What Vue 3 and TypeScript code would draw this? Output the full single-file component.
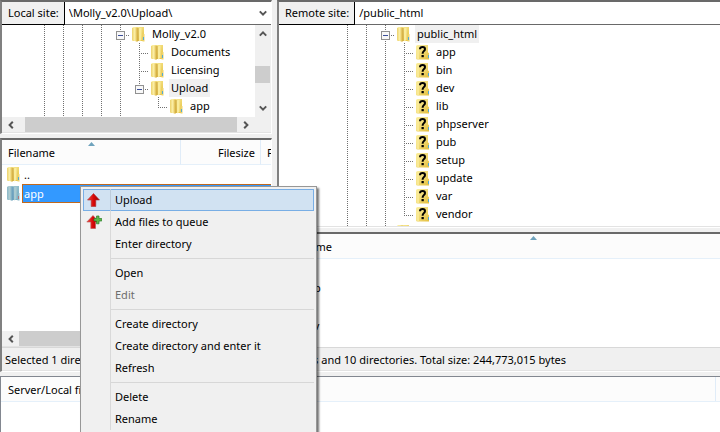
<script setup lang="ts">
import { ref } from 'vue'

// Guide cells drawn before an entry: v = line, t = tee, l = elbow, x = expander, e = last expander, b = blank
interface TreeNode {
  name: string
  guides: string
  icon: 'folder' | 'unknown' | 'none'
  selected?: boolean
}
interface MenuEntry {
  label?: string
  icon?: 'upload' | 'queue'
  active?: boolean
  disabled?: boolean
  separator?: boolean
}

const localPath = ref('\\Molly_v2.0\\Upload\\')
const remotePath = ref('/public_html')

const localTree: TreeNode[] = [
  { name: 'Molly_v2.0', guides: 'vvvvx', icon: 'folder' },
  { name: 'Documents', guides: 'vvvvvt', icon: 'folder' },
  { name: 'Licensing', guides: 'vvvvvt', icon: 'folder' },
  { name: 'Upload', guides: 'vvvvve', icon: 'folder', selected: true },
  { name: 'app', guides: 'vvvvvbl', icon: 'folder' },
  { name: '', guides: 'vvvvv', icon: 'none' },
]

const remoteNames = ['app', 'bin', 'dev', 'lib', 'phpserver', 'pub', 'setup', 'update', 'var', 'vendor']
const remoteTree: TreeNode[] = [
  { name: 'public_html', guides: 'vvx', icon: 'folder', selected: true },
  ...remoteNames.map((name, i): TreeNode => ({
    name,
    guides: i === remoteNames.length - 1 ? 'vvvl' : 'vvvt',
    icon: 'unknown',
  })),
  { name: '', guides: 'vvv', icon: 'folder' },
]

const remoteFiles = ['..', 'app', 'bin', 'dev']

const menu: MenuEntry[] = [
  { label: 'Upload', icon: 'upload', active: true },
  { label: 'Add files to queue', icon: 'queue' },
  { label: 'Enter directory' },
  { separator: true },
  { label: 'Open' },
  { label: 'Edit', disabled: true },
  { separator: true },
  { label: 'Create directory' },
  { label: 'Create directory and enter it' },
  { label: 'Refresh' },
  { separator: true },
  { label: 'Delete' },
  { label: 'Rename' },
]

const guidePaths: Record<string, string> = {
  v: 'M9.5 0V18',
  t: 'M9.5 0V18M11 10.5H19',
  l: 'M9.5 0V10M9 10.5H19',
  x: 'M9.5 0V5M9.5 16V18M15 10.5H19',
  e: 'M9.5 0V5M15 10.5H19',
  b: '',
}
</script>

<template>
  <svg class="defs" aria-hidden="true">
    <defs>
      <linearGradient id="gold" x1="0" y1="0" x2="1" y2="1">
        <stop offset="0" stop-color="#fdf3a8" />
        <stop offset="1" stop-color="#e4bf3e" />
      </linearGradient>
      <linearGradient id="flap" x1="0" y1="0" x2="1" y2="0">
        <stop offset="0" stop-color="#ecd26c" />
        <stop offset="0.5" stop-color="#fcf0a8" />
        <stop offset="1" stop-color="#d9b03a" />
      </linearGradient>
      <linearGradient id="red" x1="0" y1="0" x2="1" y2="0">
        <stop offset="0" stop-color="#f04a40" />
        <stop offset="0.5" stop-color="#d80808" />
        <stop offset="1" stop-color="#900" />
      </linearGradient>
      <symbol id="folder" viewBox="0 0 20 18">
        <path d="M2 3.5Q2 2 3.5 2H14V16H3.5Q2 16 2 14.5Z" fill="url(#gold)" />
        <path d="M2 3L7.5 2.5V17L2 15Z" fill="url(#flap)" />
        <path d="M8 3V16" stroke="#c9a23a" />
        <path d="M9 3.5L11.5 2.5V15L9 16.5Z" fill="#faec9c" />
        <path d="M12.5 9H14.5V16.5H12.5Z" fill="#eed36a" />
        <path d="M13.5 12V15" stroke="#54a9d2" />
      </symbol>
      <symbol id="unknown" viewBox="0 0 20 18">
        <path d="M2 3.5Q2 2 3.5 2H14V9.5L15 10V16.5H3.5Q2 16.5 2 15Z" fill="url(#gold)" />
        <path d="M2.5 3V15.5L5 16.5V2.5Z" fill="#f9e994" />
        <path d="M14.5 12V15" stroke="#54a9d2" />
        <path d="M6 6.2Q6 3.9 8.6 3.9Q11 3.9 11 6Q11 7.3 9.7 8.2Q8.6 9 8.6 10.7" fill="none" stroke="#000" stroke-width="2" />
        <path d="M7.5 12H9.8V14.2H7.5Z" />
      </symbol>
      <symbol id="up" viewBox="0 0 8 8"><path d="M0.8 5.6L4 2.4L7.2 5.6" fill="none" stroke="#555" stroke-width="2" /></symbol>
      <symbol id="down" viewBox="0 0 8 8"><path d="M0.8 2.4L4 5.6L7.2 2.4" fill="none" stroke="#555" stroke-width="2" /></symbol>
      <symbol id="left" viewBox="0 0 8 8"><path d="M5.8 0.8L2.6 4L5.8 7.2" fill="none" stroke="#555" stroke-width="2" /></symbol>
      <symbol id="right" viewBox="0 0 8 8"><path d="M2.2 0.8L5.4 4L2.2 7.2" fill="none" stroke="#555" stroke-width="2" /></symbol>
    </defs>
  </svg>

  <div class="window">
    <main class="sites">
      <div class="site">
        <section class="pane">
          <div class="address">
            <label for="local-path">Local site:</label>
            <input id="local-path" v-model="localPath" type="text" />
            <button type="button" class="drop" aria-label="Recent local directories"><svg class="arrow"><use href="#down" /></svg></button>
          </div>
          <div class="tree-area">
            <ul class="tree local">
              <li v-for="(node, i) in localTree" :key="i">
                <svg v-for="(g, j) in node.guides" :key="j" class="guide" viewBox="0 0 19 18">
                  <path :d="guidePaths[g]" stroke="#707070" stroke-dasharray="1 1" />
                  <g v-if="g === 'x' || g === 'e'">
                    <rect x="5.5" y="6.5" width="8" height="8" fill="#f8f8f8" stroke="#919191" />
                    <path d="M7 10.5H12" stroke="#3b4f9a" />
                  </g>
                </svg>
                <svg v-if="node.icon !== 'none'" class="icon"><use :href="'#' + node.icon" /></svg>
                <span v-if="node.name" class="name" :class="{ selected: node.selected }">{{ node.name }}</span>
              </li>
            </ul>
            <div class="vscroll">
              <button type="button" aria-label="Scroll up"><svg class="arrow"><use href="#up" /></svg></button>
              <div class="track"><div class="thumb"></div></div>
              <button type="button" aria-label="Scroll down"><svg class="arrow"><use href="#down" /></svg></button>
            </div>
          </div>
          <div class="hscroll tree-scroll">
            <button type="button" aria-label="Scroll left"><svg class="arrow"><use href="#left" /></svg></button>
            <div class="thumb"></div>
            <button type="button" aria-label="Scroll right"><svg class="arrow"><use href="#right" /></svg></button>
          </div>
        </section>

        <section class="pane list">
          <div class="files">
            <table class="local-files">
              <colgroup><col class="col-name" /><col class="col-size" /><col /></colgroup>
              <thead>
                <tr>
                  <th class="sorted">Filename<svg class="sort" viewBox="0 0 7 4"><path d="M3.5 0L7 4H0Z" /></svg></th>
                  <th class="number">Filesize</th>
                  <th>Filetype</th>
                </tr>
              </thead>
              <tbody>
                <tr>
                  <td><div class="file"><svg class="icon"><use href="#folder" /></svg><span>..</span></div></td>
                  <td></td>
                  <td></td>
                </tr>
                <tr class="current">
                  <td><div class="file"><svg class="icon"><use href="#folder" /></svg><span>app</span></div></td>
                  <td></td>
                  <td></td>
                </tr>
              </tbody>
            </table>
          </div>
          <div class="hscroll">
            <button type="button" aria-label="Scroll left"><svg class="arrow"><use href="#left" /></svg></button>
            <div class="thumb"></div>
            <button type="button" aria-label="Scroll right"><svg class="arrow"><use href="#right" /></svg></button>
          </div>
          <p class="status">Selected 1 directory.</p>
        </section>
      </div>

      <div class="site">
        <section class="pane">
          <div class="address">
            <label for="remote-path">Remote site:</label>
            <input id="remote-path" v-model="remotePath" type="text" />
          </div>
          <div class="tree-area remote-area">
            <ul class="tree remote">
              <li v-for="(node, i) in remoteTree" :key="i">
                <svg v-for="(g, j) in node.guides" :key="j" class="guide" viewBox="0 0 19 18">
                  <path :d="guidePaths[g]" stroke="#707070" stroke-dasharray="1 1" />
                  <g v-if="g === 'x' || g === 'e'">
                    <rect x="5.5" y="6.5" width="8" height="8" fill="#f8f8f8" stroke="#919191" />
                    <path d="M7 10.5H12" stroke="#3b4f9a" />
                  </g>
                </svg>
                <svg class="icon"><use :href="'#' + node.icon" /></svg>
                <span v-if="node.name" class="name" :class="{ selected: node.selected }">{{ node.name }}</span>
              </li>
            </ul>
          </div>
        </section>

        <section class="pane list">
          <div class="files">
            <table class="remote-files">
              <thead>
                <tr><th class="sorted">Filename<svg class="sort" viewBox="0 0 7 4"><path d="M3.5 0L7 4H0Z" /></svg></th></tr>
              </thead>
              <tbody>
                <tr v-for="file in remoteFiles" :key="file">
                  <td><div class="file"><svg class="icon"><use href="#folder" /></svg><span>{{ file }}</span></div></td>
                </tr>
              </tbody>
            </table>
          </div>
          <p class="status">12 files and 10 directories. Total size: 244,773,015 bytes</p>
        </section>
      </div>
    </main>

    <section class="queue">
      <div class="queue-head"><span>Server/Local file</span></div>
    </section>

    <div class="menu" role="menu">
      <template v-for="(entry, i) in menu" :key="i">
        <div v-if="entry.separator" class="separator" role="separator"><span></span></div>
        <button v-else type="button" role="menuitem" class="entry" :class="{ active: entry.active }" :disabled="entry.disabled">
          <span class="gutter">
            <svg v-if="entry.icon === 'upload'" viewBox="0 0 16 16">
              <path d="M7.5 1.5L13.5 8H9.8V14.5H5.2V8H1.5Z" fill="url(#red)" stroke="#a33" stroke-width="0.6" />
            </svg>
            <svg v-else-if="entry.icon === 'queue'" viewBox="0 0 16 16">
              <path d="M7 1.5L13 8H9.5V14.5H4.8V8H0.8Z" fill="url(#red)" stroke="#b55" stroke-width="0.6" />
              <path d="M10.5 2H13V4.5H15.8V7H13V9.8H10.5V7H8V4.5H10.5Z" fill="#5cb84a" stroke="#2c7c2c" stroke-width="0.7" />
            </svg>
          </span>
          <span class="label">{{ entry.label }}</span>
        </button>
      </template>
    </div>
  </div>
</template>

<style>
body {
  margin: 0;
  overflow: hidden;
}
</style>

<style scoped>
.window {
  position: relative;
  display: grid;
  grid-template-rows: minmax(0, 93fr) minmax(0, 14fr);
  gap: 4px;
  height: 100vh;
  overflow: hidden;
  background: #f0f0f0;
  color: #000;
  font: 11px/18px "Noto Sans", "Open Sans", sans-serif;
}
.defs {
  position: absolute;
  width: 0;
  height: 0;
}
button,
input {
  margin: 0;
  padding: 0;
  border: 0;
  border-radius: 0;
  background: none;
  color: inherit;
  font: inherit;
}
svg {
  display: block;
  flex: none;
}
.arrow {
  width: 8px;
  height: 8px;
}
.icon {
  width: 20px;
  height: 18px;
}
.sites {
  display: grid;
  grid-template-columns: minmax(0, 272fr) minmax(0, 443fr);
  gap: 5px;
}
.site {
  display: flex;
  flex-direction: column;
  gap: 4px;
  min-height: 0;
}
.pane {
  display: flex;
  flex-direction: column;
  border: 2px solid #696969;
  border-left-color: #808080;
  border-right: 1px solid #fff;
  border-bottom: 1px solid #fff;
  background: #fff;
}
.site:last-child .pane {
  border-right: 0;
}
.list {
  flex: 1;
  min-height: 0;
}
.address {
  display: flex;
  height: 22px;
  border-bottom: 1px solid #696969;
  line-height: 22px;
}
.address label {
  padding: 0 5px 0 6px;
  border-right: 1px solid #000;
  box-shadow: 0 1px #000;
  background: #f0f0f0;
}
.address input {
  flex: 1;
  min-width: 0;
  padding: 0 4px;
  outline: 0;
}
.drop {
  display: grid;
  place-items: center;
  width: 16px;
}
.tree-area {
  display: flex;
  height: 92px;
  overflow: hidden;
}
.remote-area {
  height: 201px;
  border-bottom: 1px solid #e3e3e3;
}
.tree {
  flex: 1;
  margin: 0;
  padding: 0 0 0 33px;
  list-style: none;
}
.tree.remote {
  padding-left: 59px;
}
.tree li {
  display: flex;
  height: 18px;
}
.guide {
  width: 19px;
  height: 18px;
  fill: none;
  shape-rendering: crispEdges;
}
.name {
  padding: 0 2px;
  white-space: nowrap;
}
.name.selected {
  background: #f0f0f0;
}
.vscroll {
  display: flex;
  flex-direction: column;
  width: 16px;
  background: #f0f0f0;
}
.vscroll button {
  display: grid;
  place-items: center;
  height: 18px;
}
.track {
  display: flex;
  flex: 1;
  align-items: center;
  padding-top: 6px;
}
.vscroll .thumb {
  width: 15px;
  height: 17px;
  background: #cdcdcd;
}
.hscroll {
  display: flex;
  height: 15px;
  border-bottom: 1px solid #e3e3e3;
  background: #f0f0f0;
}
.hscroll button {
  display: grid;
  place-items: center;
  width: 17px;
}
.hscroll .thumb {
  flex: 1;
  background: #cdcdcd;
}
.tree-scroll {
  padding-right: 17px;
}
.tree-scroll .thumb {
  margin-left: 6px;
}
.files {
  flex: 1;
  min-height: 0;
  overflow: hidden;
}
table {
  table-layout: fixed;
  border-collapse: separate;
  border-spacing: 0;
}
.local-files {
  width: 340px;
}
.remote-files {
  width: 508px;
}
.col-name {
  width: 179px;
}
.col-size {
  width: 80px;
}
th {
  box-sizing: border-box;
  height: 25px;
  padding: 1px 5px 0 6px;
  border-right: 1px solid #e0ecf8;
  border-bottom: 1px solid #e5f0fa;
  background: #fcfcfc;
  font-weight: 400;
  text-align: left;
}
th.number {
  text-align: right;
}
.sorted {
  position: relative;
}
.sort {
  position: absolute;
  top: 2px;
  left: 50%;
  width: 7px;
  height: 4px;
  margin-left: -3px;
  fill: #6fa3bd;
}
td {
  height: 19px;
  padding: 0;
}
.file {
  display: flex;
  height: 19px;
  padding-left: 3px;
  line-height: 19px;
}
.file .icon {
  width: 20px;
  margin-right: -3px;
}
.file span {
  flex: 1;
  padding-left: 2px;
}
.current .icon {
  filter: hue-rotate(150deg) saturate(0.6) brightness(0.85);
}
.current span,
.current td + td {
  box-sizing: border-box;
  height: 19px;
  border: 0 solid #c2691c;
  border-width: 1px 0;
  background: #39f;
  color: #fff;
  line-height: 17px;
}
.current span {
  padding-left: 1px;
  border-left-width: 1px;
}
.status {
  flex: none;
  height: 22px;
  margin: 0;
  padding-left: 3px;
  border-top: 1px solid #d8d8d8;
  border-bottom: 1px solid #e3e3e3;
  background: #f0f0f0;
  line-height: 23px;
  white-space: nowrap;
}
.queue {
  border-top: 1px solid #828790;
  border-left: 1px solid #828790;
  background: #fff;
}
.queue-head {
  display: flex;
  height: 24px;
  padding-right: 4px;
  border-bottom: 1px solid #e5f0fa;
  background: #fcfcfc;
  line-height: 25px;
}
.queue-head span {
  flex: 1;
  padding-left: 7px;
  border-right: 1px solid #e0ecf8;
}
.menu {
  position: absolute;
  top: 186px;
  left: 80px;
  width: 231px;
  padding: 2px;
  border: 1px solid #979797;
  background: #f0f0f0;
  box-shadow: 2px 2px 2px rgba(0, 0, 0, 0.55);
}
.entry {
  display: flex;
  width: 100%;
  height: 22px;
  line-height: 22px;
  text-align: left;
}
.entry:disabled {
  color: #6d6d6d;
}
.entry.active {
  background: #d1e2f2;
  box-shadow: inset 0 0 0 1px #78aee5;
}
.gutter {
  display: flex;
  align-items: center;
  width: 27px;
  border-right: 1px solid #d9d9d9;
}
.gutter svg {
  width: 16px;
  height: 16px;
  margin-left: 3px;
}
.active .gutter {
  border-color: #bccbda;
}
.label {
  padding-left: 4px;
}
.separator {
  display: flex;
  align-items: center;
  height: 7px;
  margin-left: 27px;
  border-left: 1px solid #d9d9d9;
}
.separator span {
  flex: 1;
  height: 1px;
  background: #d7d7d7;
}
</style>
